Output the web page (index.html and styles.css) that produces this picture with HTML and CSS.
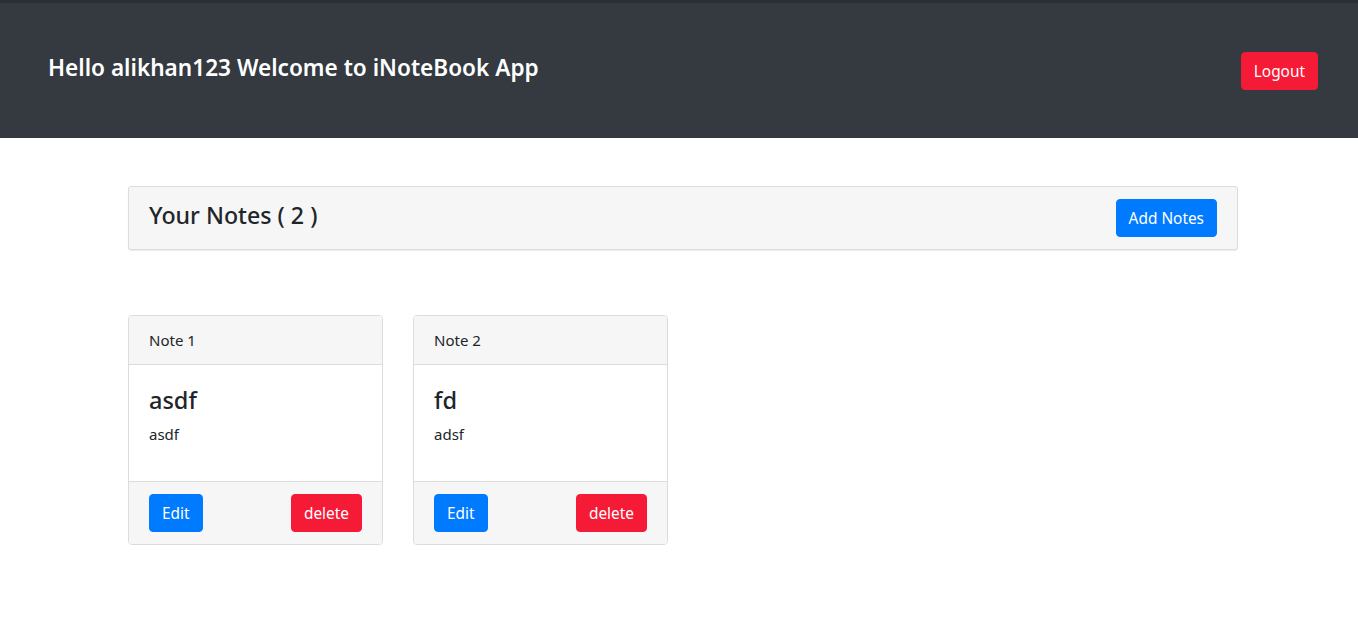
FILE: index.html
```html
<!DOCTYPE html>
<html lang="en">
<head>
<meta charset="utf-8">
<title>iNoteBook</title>
<link rel="stylesheet" href="styles.css">
</head>
<body>
<header class="topbar">
  <h1 class="greeting">Hello alikhan123 Welcome to iNoteBook App</h1>
  <button class="btn btn-red">Logout</button>
</header>
<main class="container">
  <section class="notes-head">
    <h2 class="notes-title">Your Notes ( 2 )</h2>
    <button class="btn btn-blue">Add Notes</button>
  </section>
  <section class="cards">
    <article class="card">
      <div class="card-header">Note 1</div>
      <div class="card-body">
        <h3 class="card-title">asdf</h3>
        <p class="card-text">asdf</p>
      </div>
      <div class="card-footer">
        <button class="btn btn-blue">Edit</button>
        <button class="btn btn-red">delete</button>
      </div>
    </article>
    <article class="card">
      <div class="card-header">Note 2</div>
      <div class="card-body">
        <h3 class="card-title">fd</h3>
        <p class="card-text">adsf</p>
      </div>
      <div class="card-footer">
        <button class="btn btn-blue">Edit</button>
        <button class="btn btn-red">delete</button>
      </div>
    </article>
  </section>
</main>
</body>
</html>
```
FILE: styles.css
```css
* { box-sizing: border-box; }
html, body { margin: 0; padding: 0; }
body {
  font-family: "Noto Sans", "Open Sans", sans-serif;
  font-size: 16px;
  line-height: 1.5;
  color: #212529;
  background: #fff;
}
.topbar {
  background: #343a40;
  border-top: 3px solid #2b2f33;
  height: 138px;
  display: flex;
  align-items: center;
  justify-content: space-between;
  padding: 0 40px 0 48px;
}
.greeting {
  margin: 0 0 6px;
  color: #fff;
  font-size: 22.6px;
  font-weight: 600;
  line-height: 1.2;
}
.btn {
  font-family: inherit;
  font-size: 15.4px;
  line-height: 24px;
  height: 38px;
  padding: 7px 12px 5px;
  border: 1px solid transparent;
  border-radius: 4px;
  color: #fff;
  cursor: pointer;
}
.btn-red { background: #f51a36; border-color: #f51a36; }
.btn-blue { background: #007bff; border-color: #007bff; }
.container {
  width: 1110px;
  margin: 48px 0 0 128px;
}
.notes-head {
  display: flex;
  align-items: center;
  justify-content: space-between;
  padding: 12px 20px;
  background: #f6f6f6;
  border: 1px solid #dcdcdc;
  border-radius: 3px;
  box-shadow: 0 1px 1px rgba(0,0,0,0.08);
}
.notes-title {
  margin: 0 0 5px;
  font-size: 23.2px;
  font-weight: 500;
  line-height: 1.2;
}
.cards {
  display: flex;
  gap: 30px;
  margin-top: 65px;
}
.card {
  width: 255px;
  border: 1px solid #dcdcdc;
  border-radius: 4px;
  overflow: hidden;
}
.card-header {
  background: #f6f6f6;
  padding: 12px 20px;
  border-bottom: 1px solid #dcdcdc;
  font-size: 15px;
  line-height: 24px;
}
.card-body { padding: 20px 20px 20px; }
.card-title {
  margin: 0 0 7px;
  font-size: 23.5px;
  font-weight: 500;
  line-height: 30px;
}
.card-text { margin: 0 0 15px; font-size: 15px; line-height: 24px; }
.card-footer {
  background: #f6f6f6;
  border-top: 1px solid #dcdcdc;
  padding: 12px 20px;
  display: flex;
  justify-content: space-between;
}
```
